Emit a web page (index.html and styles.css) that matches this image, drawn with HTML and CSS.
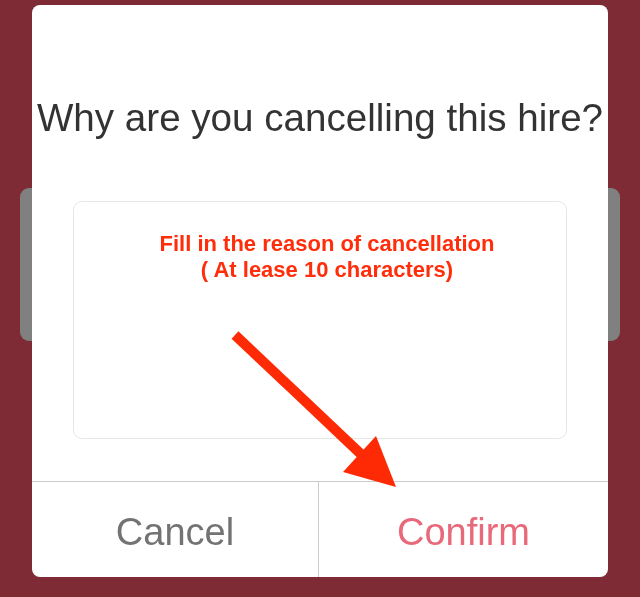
FILE: index.html
```html
<!DOCTYPE html>
<html lang="en">
<head>
  <meta charset="UTF-8">
  <title>Cancel Hire</title>
  <link rel="stylesheet" href="styles.css">
</head>
<body>

<!-- card from the page underneath -->
<div class="hire-card"></div>

<!-- Cancel dialog -->
<div class="dialog">
  <h2 class="dialog-title">Why are you cancelling this hire?</h2>
  <div class="reason-box">
    <p class="reason-hint">Fill in the reason of cancellation<br>( At lease 10 characters)</p>
  </div>
  <div class="dialog-actions">
    <button class="btn-cancel">Cancel</button>
    <button class="btn-confirm">Confirm</button>
  </div>

  <!-- pointer to the confirm button -->
  <svg class="hint-arrow" width="576" height="572" viewBox="0 0 576 572">
    <line x1="203" y1="330" x2="332" y2="452" stroke="#fe2a05" stroke-width="10"/>
    <polygon points="364,482 344,431 311,467" fill="#fe2a05"/>
  </svg>
</div>

</body>
</html>
```

FILE: styles.css
```css
body {
  margin: 0;
  height: 597px;
  background-color: #7e2b35;
  font-family: "Liberation Sans", Arial, sans-serif;
  overflow: hidden;
}

.hire-card {
  margin: 188px 20px 0;
  height: 153px;
  background: #808080;
  border-radius: 9px;
}

.dialog {
  position: fixed;
  top: 5px;
  left: 32px;
  width: 576px;
  height: 572px;
  background: white;
  border-radius: 8px;
  display: flex;
  flex-direction: column;
  overflow: hidden;
}

.dialog-title {
  margin: 91px 0 0;
  font-size: 38.6px;
  line-height: 44px;
  font-weight: normal;
  color: #333;
  text-align: center;
  white-space: nowrap;
}

.reason-box {
  margin: 61px 41px 0;
  height: 236px;
  border: 1px solid #e6e6e6;
  border-radius: 9px;
}

.reason-hint {
  margin: 0;
  padding: 29px 0 0 14px;
  font-size: 22px;
  line-height: 26px;
  font-weight: bold;
  color: #ff2d0a;
  text-align: center;
}

.dialog-actions {
  margin-top: auto;
  height: 95px;
  display: grid;
  grid-template-columns: 286px 1fr;
  border-top: 1px solid #cbcbcb;
}

.dialog-actions button {
  border: none;
  background: none;
  padding: 5px 0 0;
  font-family: "Liberation Sans", Arial, sans-serif;
  font-size: 38px;
  cursor: pointer;
}

.btn-cancel {
  color: #737373;
}

.btn-confirm {
  color: #e8697a;
  border-left: 1px solid #cbcbcb !important;
}

.hint-arrow {
  position: absolute;
  top: 0;
  left: 0;
  pointer-events: none;
}
```
